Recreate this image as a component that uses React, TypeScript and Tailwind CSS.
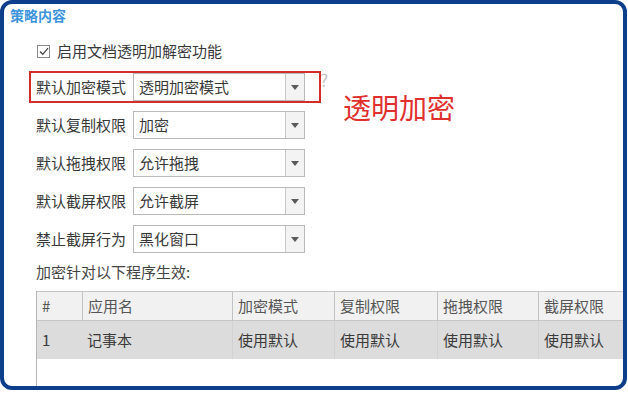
import React from "react";

const font = { fontFamily: '"Noto Sans CJK SC", "Noto Sans", sans-serif' };

function Combo({ value }: { value: string }) {
  return (
    <div className="flex h-[28px] w-[172px] border border-[#b9b9b9] bg-white">
      <div className="flex flex-1 items-center pl-[5px] text-[15px] text-[#383838]">{value}</div>
      <div className="flex w-[19px] items-center justify-center border-l border-[#c9c9c9] bg-[#f3f3f3]">
        <svg width="8" height="5" viewBox="0 0 8 5">
          <path d="M0 0 L8 0 L4 5 Z" fill="#5a5a5a" />
        </svg>
      </div>
    </div>
  );
}

function Row({ label, value }: { label: string; value: string }) {
  return (
    <div className="flex h-[28px] items-center">
      <div className="w-[97px] text-[15px] text-[#383838]">{label}</div>
      <Combo value={value} />
    </div>
  );
}

const cols = [
  { t: "#", w: 45, v: "1" },
  { t: "应用名", w: 150, v: "记事本" },
  { t: "加密模式", w: 102, v: "使用默认" },
  { t: "复制权限", w: 103, v: "使用默认" },
  { t: "拖拽权限", w: 101, v: "使用默认" },
  { t: "截屏权限", w: 110, v: "使用默认" },
];

export default function App() {
  return (
    <div className="h-[393px] w-[628px] bg-white" style={font}>
      <div className="relative h-[390px] w-[627px] overflow-hidden rounded-[12px] border-4 border-[#0d3e8c] bg-white">
        <div className="pl-[6px] pt-[1px] text-[14px] font-bold leading-[20px] text-[#3b94dc]">策略内容</div>

        <div className="mt-[16px] flex h-[20px] items-center pl-[33px]">
          <div className="flex h-[13px] w-[13px] items-center justify-center border border-[#8a8a8a] bg-white">
            <svg width="10" height="9" viewBox="0 0 10 9">
              <path d="M1 4.5 L3.8 7.3 L9 1.2" fill="none" stroke="#444" strokeWidth="1.3" />
            </svg>
          </div>
          <div className="ml-[7px] text-[15px] text-[#383838]">启用文档透明加解密功能</div>
        </div>

        <div className="mt-[12px] flex flex-col gap-[10px] pl-[32px]">
          <Row label="默认加密模式" value="透明加密模式" />
          <Row label="默认复制权限" value="加密" />
          <Row label="默认拖拽权限" value="允许拖拽" />
          <Row label="默认截屏权限" value="允许截屏" />
          <Row label="禁止截屏行为" value="黑化窗口" />
        </div>

        <div className="mt-[8px] pl-[32px] text-[15px] leading-[22px] text-[#444]">加密针对以下程序生效:</div>

        <div className="ml-[32px] mt-[8px] flex h-[200px] w-[700px] flex-col border-l border-[#b5b5b5]">
          <div className="flex h-[30px] border-y border-[#c6c6c6] bg-[#f1f1f1]">
            {cols.map((c, i) => (
              <div
                key={i}
                className={`flex items-center pl-[5px] text-[15px] text-[#555] ${i > 0 ? "border-l border-[#c2c2c2]" : ""}`}
                style={{ width: c.w }}
              >
                {c.t}
              </div>
            ))}
          </div>
          <div className="flex h-[38px] bg-[#dcdcdc]">
            {cols.map((c, i) => (
              <div
                key={i}
                className={`flex items-center pl-[5px] text-[15px] text-[#3a3a3a] ${i > 1 ? "border-l border-[#d2d2d2]" : ""}`}
                style={{ width: c.w }}
              >
                {c.v}
              </div>
            ))}
          </div>
        </div>

        <div className="absolute left-[316px] top-[67px] text-[17px] leading-[18px] text-[#c4c4c4]">?</div>
        <div className="absolute left-[25px] top-[67px] h-[32px] w-[292px] border-2 border-[#d42b2b]" />
        <div className="absolute left-[339px] top-[85px] text-[28px] leading-[36px] text-[#e0302e]">透明加密</div>
      </div>
    </div>
  );
}
